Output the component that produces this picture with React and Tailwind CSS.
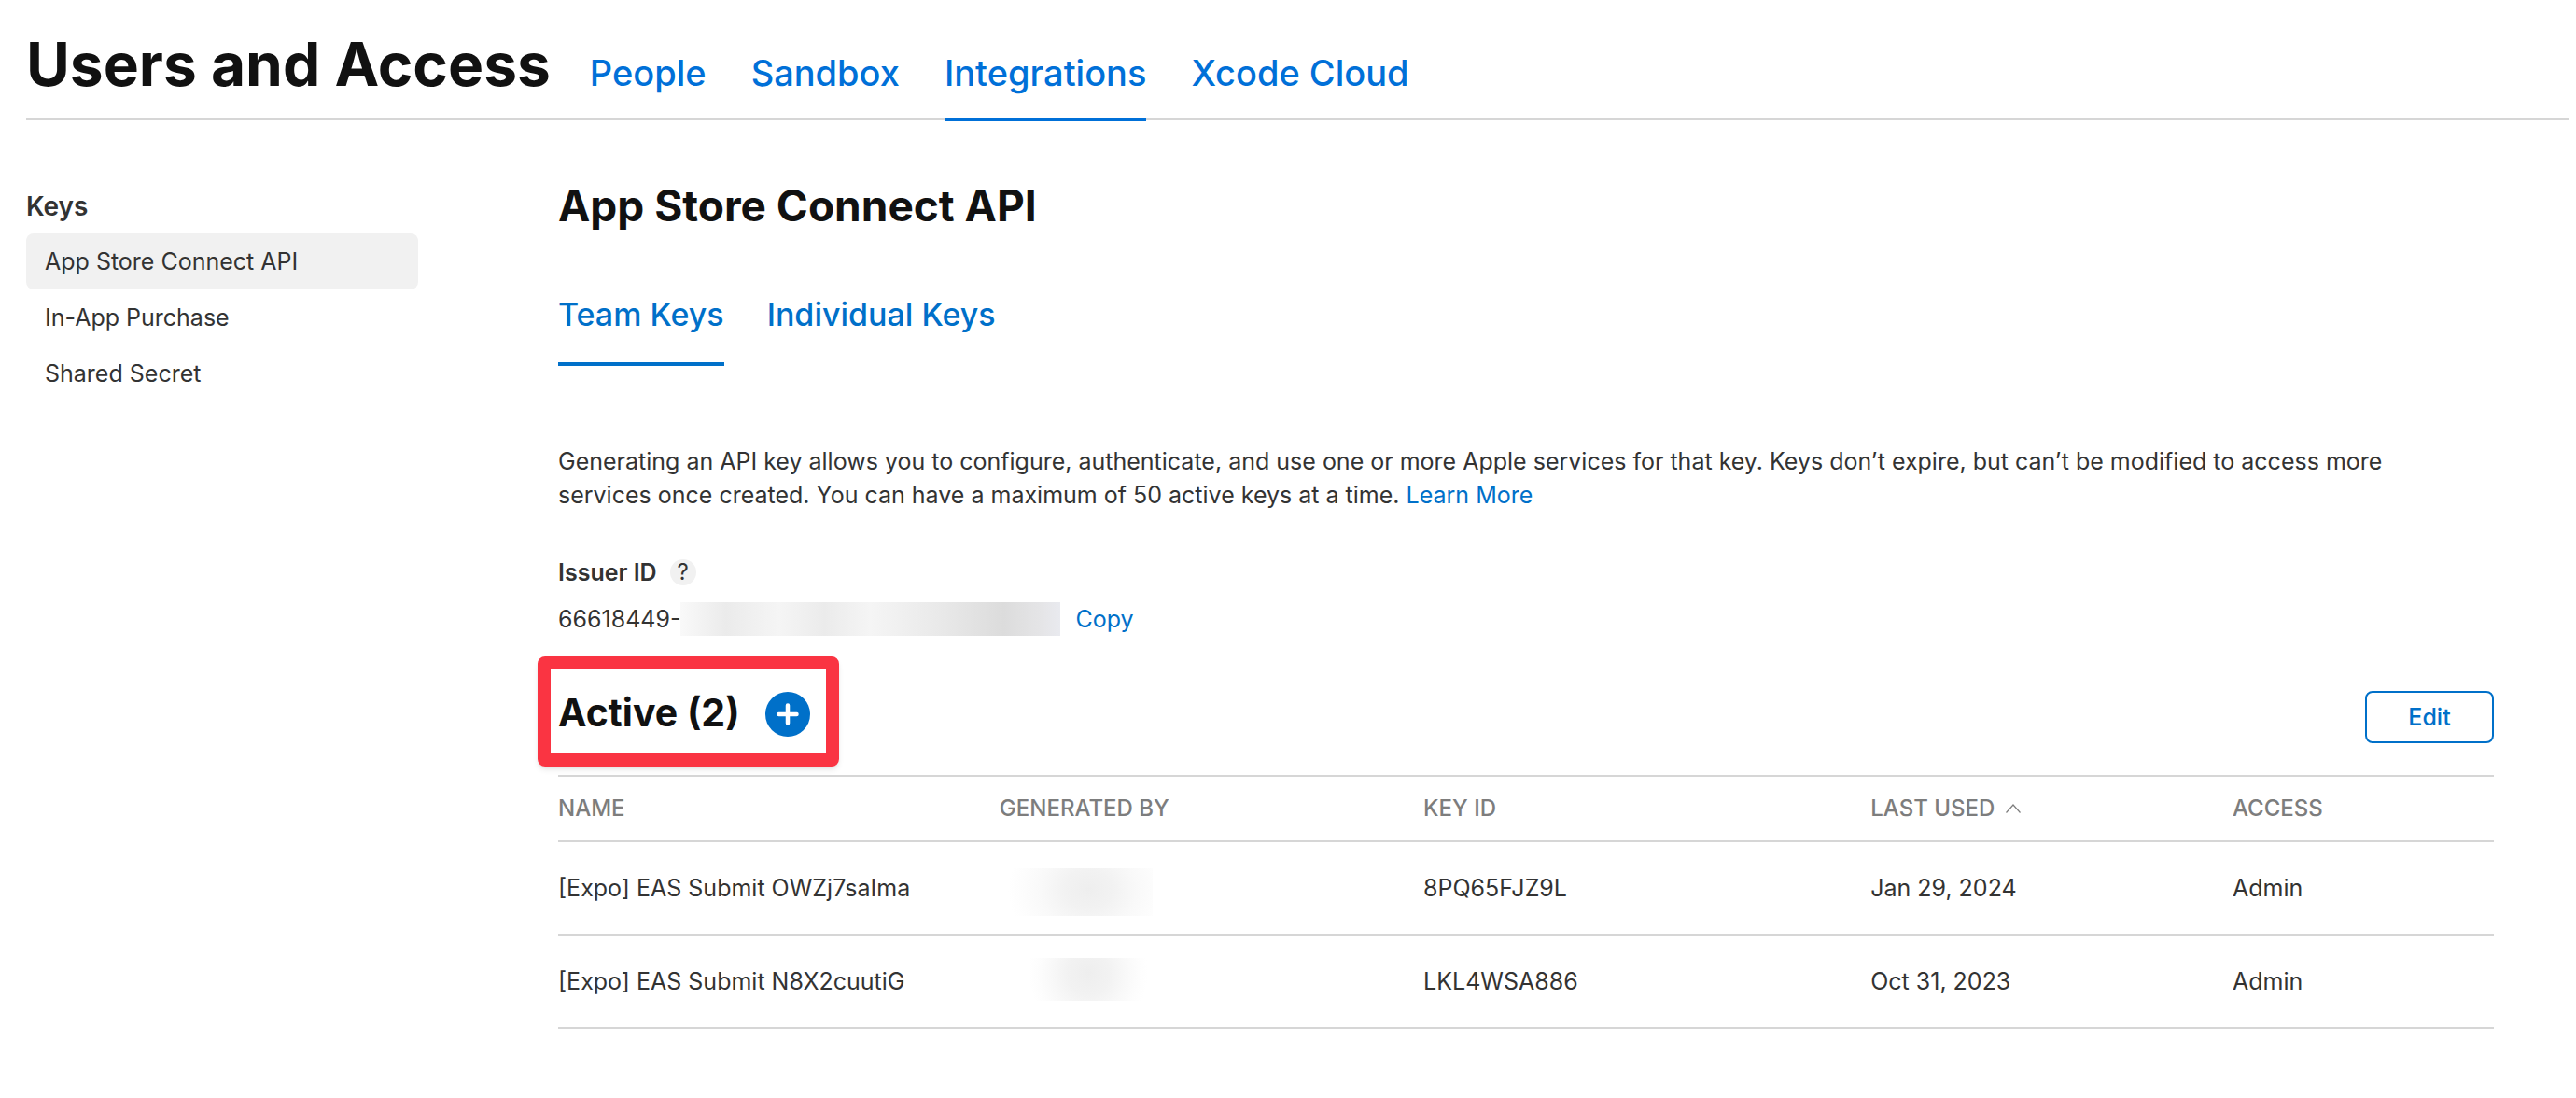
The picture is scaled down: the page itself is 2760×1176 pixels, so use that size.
import React from "react";

const topTabs = ["People", "Sandbox", "Integrations", "Xcode Cloud"];
const sideItems = ["App Store Connect API", "In-App Purchase", "Shared Secret"];

const rows = [
  {
    name: "[Expo] EAS Submit OWZj7saIma",
    redacted:
      "-ml-2 mt-2 h-[51px] w-[172px] bg-[radial-gradient(ellipse_50%_140%_at_60%_45%,#eeeeee_0%,#f2f2f2_30%,#f9f9f9_60%,#fdfdfd_85%,#ffffff_100%)]",
    keyId: "8PQ65FJZ9L",
    lastUsed: "Jan 29, 2024",
    access: "Admin",
  },
  {
    name: "[Expo] EAS Submit N8X2cuutiG",
    redacted:
      "-mt-1 ml-6 h-[46px] w-[142px] bg-[radial-gradient(ellipse_45%_150%_at_50%_35%,#eeeeee_0%,#f2f2f2_35%,#f9f9f9_65%,#fdfdfd_85%,#ffffff_100%)]",
    keyId: "LKL4WSA886",
    lastUsed: "Oct 31, 2023",
    access: "Admin",
  },
];

function PageHeader() {
  return (
    <header className="mr-2 ml-7 flex items-baseline gap-[42px] border-b-2 border-[#d6d6d6] pt-[29px]">
      <h1 className="text-[64px] leading-[80px] font-bold text-[#111111]">Users and Access</h1>
      <nav aria-label="Sections" className="-mb-1 flex gap-12">
        {topTabs.map((tab) => (
          <a
            key={tab}
            href="#"
            aria-current={tab === "Integrations" ? "page" : undefined}
            className={`border-b-4 pb-6 text-[38px] leading-[48px] font-medium text-[#0070d8] ${
              tab === "Integrations" ? "border-[#0070d8]" : "border-transparent"
            }`}
          >
            {tab}
          </a>
        ))}
      </nav>
    </header>
  );
}

function Sidebar() {
  return (
    <aside className="w-[420px] shrink-0 pt-[72px]">
      <h2 className="mb-2 text-[28px] leading-[42px] font-semibold">Keys</h2>
      <nav aria-label="Keys">
        {sideItems.map((item, i) => (
          <a
            key={item}
            href="#"
            className={`flex h-[60px] items-center rounded-lg px-5 ${i === 0 ? "bg-[#f1f1f1]" : ""}`}
          >
            {item}
          </a>
        ))}
      </nav>
    </aside>
  );
}

function IssuerId() {
  return (
    <section className="mt-[47px]">
      <div className="flex items-center gap-3.5">
        <h3 className="font-semibold">Issuer ID</h3>
        <button
          type="button"
          aria-label="About the issuer ID"
          className="flex size-7 items-center justify-center rounded-full bg-[#f1f1f1] text-2xl leading-7"
        >
          ?
        </button>
      </div>
      <div className="mt-3.5 flex items-center">
        <span>66618449-</span>
        <span className="h-9 w-[407px] bg-[linear-gradient(90deg,#f9f9f9_0%,#ebebeb_12%,#f5f5f5_26%,#ebebeb_38%,#f5f5f5_50%,#eaeaea_67%,#dcdcdc_85%,#e5e5e7_95%,#e9eaef_100%)]" />
        <button type="button" className="ml-4 text-[#0070c9]">
          Copy
        </button>
      </div>
    </section>
  );
}

function ActiveBar() {
  return (
    <div className="mt-[59px] mb-[34px] flex items-start justify-between">
      <div className="relative mt-px flex items-start gap-[27px]">
        <h3 className="text-[41px] leading-[44px] font-bold text-[#111111]">Active (2)</h3>
        <button
          type="button"
          aria-label="Generate API key"
          className="flex size-12 items-center justify-center rounded-full bg-[#0070c9] text-white"
        >
          <svg viewBox="0 0 48 48" className="size-12" fill="none" stroke="currentColor" strokeWidth="4.5" strokeLinecap="round">
            <path d="M24 14.5v19M14.500 24h19" />
          </svg>
        </button>
        <span className="pointer-events-none absolute -top-[38px] -right-[31px] -bottom-8 -left-[22px] rounded-lg border-[14px] border-[#fa3442] shadow-md" />
      </div>
      <button
        type="button"
        className="h-14 w-[138px] rounded-lg border-2 border-[#0070c9] font-medium text-[#0070c9]"
      >
        Edit
      </button>
    </div>
  );
}

function KeysTable() {
  const th = "h-[72px] border-y-2 border-[#d6d6d6] p-0 font-medium";
  const td = "border-b-2 border-[#d6d6d6] p-0";
  return (
    <table className="w-full table-fixed border-separate border-spacing-0 text-left">
      <colgroup>
        <col className="w-[22.8%]" />
        <col className="w-[21.9%]" />
        <col className="w-[23.1%]" />
        <col className="w-[18.7%]" />
        <col />
      </colgroup>
      <thead className="text-2xl text-[#7d7d7d]">
        <tr>
          <th className={th}>NAME</th>
          <th className={th}>GENERATED BY</th>
          <th className={th}>KEY ID</th>
          <th className={th} aria-sort="ascending">
            <button type="button" className="flex items-center gap-3">
              LAST USED
              <svg viewBox="0 0 16 10" className="h-2.5 w-4" fill="none" stroke="currentColor" strokeWidth="1.2">
                <path d="M0.500 9.500L8 1l7.500 8.500" />
              </svg>
            </button>
          </th>
          <th className={th}>ACCESS</th>
        </tr>
      </thead>
      <tbody>
        {rows.map((row) => (
          <tr key={row.keyId} className="h-[100px]">
            <td className={td}>{row.name}</td>
            <td className={td}>
              <div className={row.redacted} />
            </td>
            <td className={td}>{row.keyId}</td>
            <td className={td}>{row.lastUsed}</td>
            <td className={td}>{row.access}</td>
          </tr>
        ))}
      </tbody>
    </table>
  );
}

export default function App() {
  return (
    <div className="min-h-screen bg-white font-[Inter,sans-serif] text-[25px] leading-9 text-[#333333]">
      <PageHeader />
      <div className="flex gap-[150px] pr-[88px] pb-[72px] pl-7">
        <Sidebar />
        <main className="min-w-0 flex-1 pt-16">
          <h2 className="text-[46px] leading-[56px] font-bold text-[#111111]">App Store Connect API</h2>
          <nav aria-label="Key type" className="mt-16 flex gap-[46px] text-[34px] leading-[50px] font-medium text-[#0070c9]">
            <a href="#" aria-current="page" className="border-b-4 border-[#0070c9] pb-[26px]">
              Team Keys
            </a>
            <a href="#">Individual Keys</a>
          </nav>
          <p className="mt-[84px] pr-8">
            Generating an API key allows you to configure, authenticate, and use one or more Apple services for that
            key. Keys don’t expire, but can’t be modified to access more services once created. You can have a maximum
            of 50 active keys at a time.{" "}
            <a href="#" className="text-[#0070c9]">
              Learn More
            </a>
          </p>
          <IssuerId />
          <ActiveBar />
          <KeysTable />
        </main>
      </div>
    </div>
  );
}
